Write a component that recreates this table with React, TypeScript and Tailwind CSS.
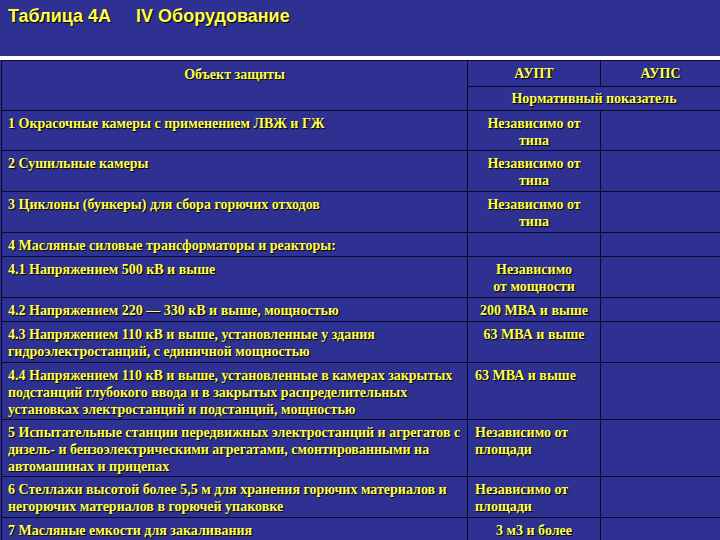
import React from 'react';

type Row = {
  name: string[];
  aupt?: string[];
  align?: 'center' | 'left';
  h: string;
};

const rows: Row[] = [
  { name: ['1 Окрасочные камеры с применением ЛВЖ и ГЖ'], aupt: ['Независимо от', 'типа'], h: 'h-[40px]' },
  { name: ['2 Сушильные камеры'], aupt: ['Независимо от', 'типа'], h: 'h-[41px]' },
  { name: ['3 Циклоны (бункеры) для сбора горючих отходов'], aupt: ['Независимо от', 'типа'], h: 'h-[41px]' },
  { name: ['4 Масляные силовые трансформаторы и реакторы:'], h: 'h-[24px]' },
  { name: ['4.1 Напряжением 500 кВ и выше'], aupt: ['Независимо', 'от мощности'], h: 'h-[41px]' },
  { name: ['4.2 Напряжением 220 — 330 кВ и выше, мощностью'], aupt: ['200 МВА и выше'], h: 'h-[24px]' },
  {
    name: ['4.3 Напряжением 110 кВ и выше, установленные у здания', 'гидроэлектростанций, с единичной мощностью'],
    aupt: ['63 МВА и выше'],
    h: 'h-[41px]',
  },
  {
    name: [
      '4.4 Напряжением 110 кВ и выше, установленные в камерах закрытых',
      'подстанций глубокого ввода и в закрытых распределительных',
      'установках электростанций и подстанций, мощностью',
    ],
    aupt: ['63 МВА и выше'],
    align: 'left',
    h: 'h-[57px]',
  },
  {
    name: [
      '5 Испытательные станции передвижных электростанций и агрегатов с',
      'дизель- и бензоэлектрическими агрегатами, смонтированными на',
      'автомашинах и прицепах',
    ],
    aupt: ['Независимо от', 'площади'],
    align: 'left',
    h: 'h-[57px]',
  },
  {
    name: ['6 Стеллажи высотой более 5,5 м для хранения горючих материалов и', 'негорючих материалов в горючей упаковке'],
    aupt: ['Независимо от', 'площади'],
    align: 'left',
    h: 'h-[41px]',
  },
  { name: ['7 Масляные емкости для закаливания'], aupt: ['3 м3 и более'], h: 'h-[41px]' },
];

const shadow = '[text-shadow:1px_1px_1px_#000]';

export default function App() {
  return (
    <div className="w-[720px] h-[540px] overflow-hidden bg-[#2e3192] flex flex-col">
      {/* title */}
      <div className="h-[56px] shrink-0 flex items-start gap-[25px] pl-[8px] pt-[3px] font-['Liberation_Sans',Arial,sans-serif] font-bold text-[18px] text-[#ffff4d] [text-shadow:1px_1px_1px_#000]">
        <span>Таблица 4А</span>
        <span>IV Оборудование</span>
      </div>
      <div className="h-[4px] shrink-0 bg-white" />

      <table className="w-[720px] shrink-0 table-fixed border-collapse ml-[1px] font-['Liberation_Serif','Times_New_Roman',serif] font-bold text-[14px] leading-[17px] text-[#ffff4d]">
        <colgroup>
          <col className="w-[466px]" />
          <col className="w-[133px]" />
          <col />
        </colgroup>
        <thead>
          <tr className="h-[26px]">
            <th rowSpan={2} className={`border border-[#0a0a30] align-top pt-[5px] font-bold text-center ${shadow}`}>
              Объект защиты
            </th>
            <th className={`border border-[#0a0a30] align-middle font-bold text-center ${shadow}`}>АУПТ</th>
            <th className={`border border-[#0a0a30] align-middle font-bold text-center ${shadow}`}>АУПС</th>
          </tr>
          <tr className="h-[24px]">
            <th colSpan={2} className={`border border-[#0a0a30] align-middle font-bold text-center ${shadow}`}>
              Нормативный показатель
            </th>
          </tr>
        </thead>
        <tbody>
          {rows.map((r, i) => (
            <tr key={i} className={r.h}>
              <td className={`border border-[#0a0a30] align-top pl-[6px] pt-[4px] ${shadow}`}>
                {r.name.map((l, j) => (
                  <div key={j} className="whitespace-nowrap">{l}</div>
                ))}
              </td>
              <td
                className={`border border-[#0a0a30] align-top pt-[4px] ${shadow} ${
                  r.align === 'left' ? 'text-left pl-[7px]' : 'text-center'
                }`}
              >
                {r.aupt?.map((l, j) => (
                  <div key={j} className="whitespace-nowrap">{l}</div>
                ))}
              </td>
              <td className="border border-[#0a0a30]" />
            </tr>
          ))}
        </tbody>
      </table>
    </div>
  );
}
